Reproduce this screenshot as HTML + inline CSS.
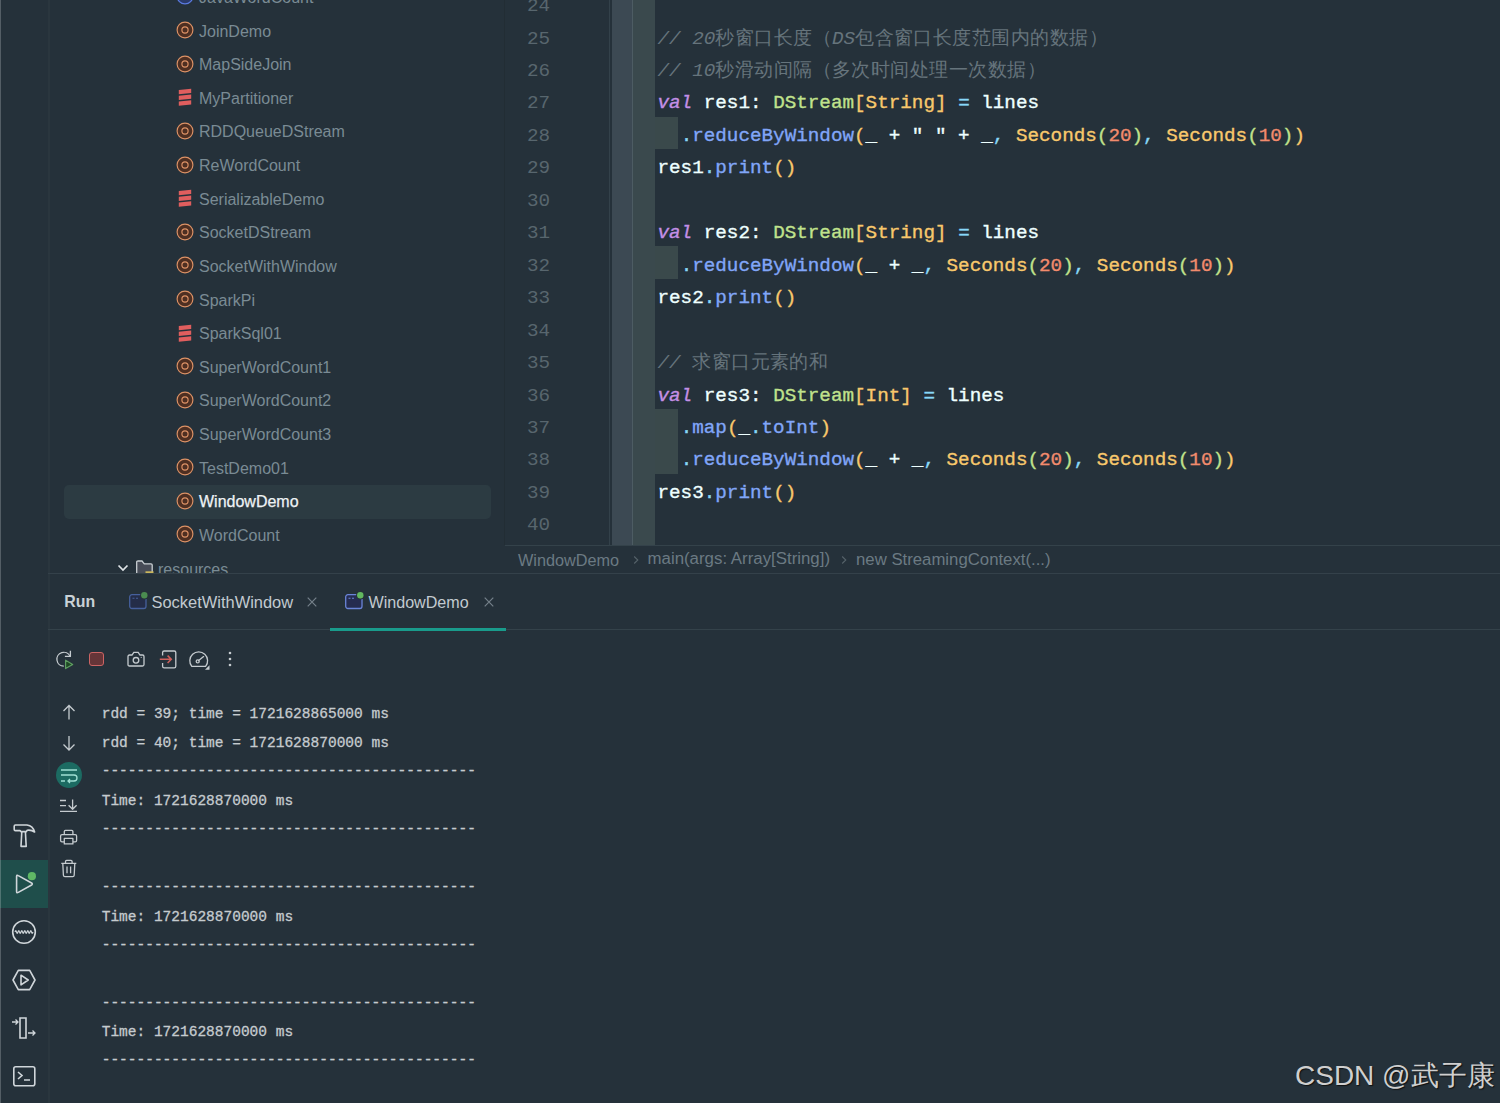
<!DOCTYPE html>
<html><head><meta charset="utf-8">
<style>
*{margin:0;padding:0;box-sizing:border-box}
html,body{width:1500px;height:1103px;overflow:hidden;background:#25313a}
body{position:relative;font-family:"Liberation Sans",sans-serif}
.a{position:absolute}
.ti{position:absolute;left:199px;font-size:16px;color:#7a8b94;white-space:nowrap;line-height:20px;height:20px}
.ic{position:absolute;width:20px;height:20px}
.ln{position:absolute;left:490px;width:60px;text-align:right;font-family:"Liberation Mono",monospace;font-size:19.28px;color:#58666e;line-height:32px;height:32px;white-space:pre}
.cl{position:absolute;left:657.5px;font-family:"Liberation Mono",monospace;font-size:19.28px;color:#eeffff;line-height:32px;height:32px;white-space:pre;-webkit-text-stroke:0.35px currentColor}
.cm{-webkit-text-stroke:0}
.cm{color:#66747c}
.cm i{font-style:italic}
.cj{letter-spacing:0.45px}
.kw{color:#c48fe6;font-style:italic}
.ty{color:#c0e28c}
.yl{color:#f8c86c}
.op{color:#88d8f8}
.fn{color:#81a6f8}
.nm{color:#f28b6d}
.co{position:absolute;left:101.7px;font-family:"Liberation Mono",monospace;font-size:14.5px;color:#c5cbcf;line-height:20px;height:20px;white-space:pre;-webkit-text-stroke:0.3px currentColor}
svg{position:absolute;overflow:visible}
</style></head><body>
<div class="a" style="left:48px;top:0;width:2px;height:1103px;background:#2a363e"></div>
<div class="a" style="left:64px;top:484.5px;width:427px;height:34px;border-radius:5px;background:#2c3b42"></div>
<div class="a" style="left:50px;top:0;width:455px;height:573px;overflow:hidden">
<div class="ti" style="left:149px;top:-12.08px;color:#7a8b94">JavaWordCount</div>
<svg style="left:135.3px;top:-3.63px" width="1" height="1"><circle cx="0" cy="0" r="7.9" fill="#2a3a6a" stroke="#5a7ae0" stroke-width="1.3"/></svg>
<div class="ti" style="left:149px;top:21.55px;color:#7a8b94">JoinDemo</div>
<svg style="left:135.3px;top:30.00px" width="1" height="1"><circle cx="0" cy="0" r="7.9" fill="#4e2f22" stroke="#dd9266" stroke-width="1.15"/><circle cx="0" cy="0" r="3.1" fill="none" stroke="#dd9266" stroke-width="1.15"/></svg>
<div class="ti" style="left:149px;top:55.18px;color:#7a8b94">MapSideJoin</div>
<svg style="left:135.3px;top:63.63px" width="1" height="1"><circle cx="0" cy="0" r="7.9" fill="#4e2f22" stroke="#dd9266" stroke-width="1.15"/><circle cx="0" cy="0" r="3.1" fill="none" stroke="#dd9266" stroke-width="1.15"/></svg>
<div class="ti" style="left:149px;top:88.81px;color:#7a8b94">MyPartitioner</div>
<svg style="left:135.3px;top:97.26px" width="1" height="1"><path d="M-6.2,-6.9 L6.2,-8.2 L6.2,-4 L-6.2,-2.7 Z M-6.2,-1.2 L6.2,-2.5 L6.2,1.7 L-6.2,3 Z M-6.2,4.5 L6.2,3.2 L6.2,7.4 L-6.2,8.7 Z" fill="#e05e5e"/></svg>
<div class="ti" style="left:149px;top:122.44px;color:#7a8b94">RDDQueueDStream</div>
<svg style="left:135.3px;top:130.89px" width="1" height="1"><circle cx="0" cy="0" r="7.9" fill="#4e2f22" stroke="#dd9266" stroke-width="1.15"/><circle cx="0" cy="0" r="3.1" fill="none" stroke="#dd9266" stroke-width="1.15"/></svg>
<div class="ti" style="left:149px;top:156.07px;color:#7a8b94">ReWordCount</div>
<svg style="left:135.3px;top:164.52px" width="1" height="1"><circle cx="0" cy="0" r="7.9" fill="#4e2f22" stroke="#dd9266" stroke-width="1.15"/><circle cx="0" cy="0" r="3.1" fill="none" stroke="#dd9266" stroke-width="1.15"/></svg>
<div class="ti" style="left:149px;top:189.70px;color:#7a8b94">SerializableDemo</div>
<svg style="left:135.3px;top:198.15px" width="1" height="1"><path d="M-6.2,-6.9 L6.2,-8.2 L6.2,-4 L-6.2,-2.7 Z M-6.2,-1.2 L6.2,-2.5 L6.2,1.7 L-6.2,3 Z M-6.2,4.5 L6.2,3.2 L6.2,7.4 L-6.2,8.7 Z" fill="#e05e5e"/></svg>
<div class="ti" style="left:149px;top:223.33px;color:#7a8b94">SocketDStream</div>
<svg style="left:135.3px;top:231.78px" width="1" height="1"><circle cx="0" cy="0" r="7.9" fill="#4e2f22" stroke="#dd9266" stroke-width="1.15"/><circle cx="0" cy="0" r="3.1" fill="none" stroke="#dd9266" stroke-width="1.15"/></svg>
<div class="ti" style="left:149px;top:256.96px;color:#7a8b94">SocketWithWindow</div>
<svg style="left:135.3px;top:265.41px" width="1" height="1"><circle cx="0" cy="0" r="7.9" fill="#4e2f22" stroke="#dd9266" stroke-width="1.15"/><circle cx="0" cy="0" r="3.1" fill="none" stroke="#dd9266" stroke-width="1.15"/></svg>
<div class="ti" style="left:149px;top:290.59px;color:#7a8b94">SparkPi</div>
<svg style="left:135.3px;top:299.04px" width="1" height="1"><circle cx="0" cy="0" r="7.9" fill="#4e2f22" stroke="#dd9266" stroke-width="1.15"/><circle cx="0" cy="0" r="3.1" fill="none" stroke="#dd9266" stroke-width="1.15"/></svg>
<div class="ti" style="left:149px;top:324.22px;color:#7a8b94">SparkSql01</div>
<svg style="left:135.3px;top:332.67px" width="1" height="1"><path d="M-6.2,-6.9 L6.2,-8.2 L6.2,-4 L-6.2,-2.7 Z M-6.2,-1.2 L6.2,-2.5 L6.2,1.7 L-6.2,3 Z M-6.2,4.5 L6.2,3.2 L6.2,7.4 L-6.2,8.7 Z" fill="#e05e5e"/></svg>
<div class="ti" style="left:149px;top:357.85px;color:#7a8b94">SuperWordCount1</div>
<svg style="left:135.3px;top:366.30px" width="1" height="1"><circle cx="0" cy="0" r="7.9" fill="#4e2f22" stroke="#dd9266" stroke-width="1.15"/><circle cx="0" cy="0" r="3.1" fill="none" stroke="#dd9266" stroke-width="1.15"/></svg>
<div class="ti" style="left:149px;top:391.48px;color:#7a8b94">SuperWordCount2</div>
<svg style="left:135.3px;top:399.93px" width="1" height="1"><circle cx="0" cy="0" r="7.9" fill="#4e2f22" stroke="#dd9266" stroke-width="1.15"/><circle cx="0" cy="0" r="3.1" fill="none" stroke="#dd9266" stroke-width="1.15"/></svg>
<div class="ti" style="left:149px;top:425.11px;color:#7a8b94">SuperWordCount3</div>
<svg style="left:135.3px;top:433.56px" width="1" height="1"><circle cx="0" cy="0" r="7.9" fill="#4e2f22" stroke="#dd9266" stroke-width="1.15"/><circle cx="0" cy="0" r="3.1" fill="none" stroke="#dd9266" stroke-width="1.15"/></svg>
<div class="ti" style="left:149px;top:458.74px;color:#7a8b94">TestDemo01</div>
<svg style="left:135.3px;top:467.19px" width="1" height="1"><circle cx="0" cy="0" r="7.9" fill="#4e2f22" stroke="#dd9266" stroke-width="1.15"/><circle cx="0" cy="0" r="3.1" fill="none" stroke="#dd9266" stroke-width="1.15"/></svg>
<div class="ti" style="left:149px;top:492.37px;color:#eef3f5;-webkit-text-stroke:0.25px #eef3f5">WindowDemo</div>
<svg style="left:135.3px;top:500.82px" width="1" height="1"><circle cx="0" cy="0" r="7.9" fill="#4e2f22" stroke="#dd9266" stroke-width="1.15"/><circle cx="0" cy="0" r="3.1" fill="none" stroke="#dd9266" stroke-width="1.15"/></svg>
<div class="ti" style="left:149px;top:526.00px;color:#7a8b94">WordCount</div>
<svg style="left:135.3px;top:534.45px" width="1" height="1"><circle cx="0" cy="0" r="7.9" fill="#4e2f22" stroke="#dd9266" stroke-width="1.15"/><circle cx="0" cy="0" r="3.1" fill="none" stroke="#dd9266" stroke-width="1.15"/></svg>
<svg style="left:73.2px;top:567.58px" width="1" height="1"><path d="M-4.5,-2.5 L0,2 L4.5,-2.5" fill="none" stroke="#dfe4e7" stroke-width="1.7"/></svg>
<svg style="left:85.7px;top:559.58px" width="1" height="1"><path d="M0.7,16 L0.7,2.2 Q0.7,1 2,1 L6,1 L8.3,3.8 L15,3.8 Q16.2,3.8 16.2,5 L16.2,16 Z" fill="#474c57" stroke="#c9cfd3" stroke-width="1.3"/><rect x="9.5" y="11.3" width="8" height="2.4" fill="#cbb75c"/></svg>
<div class="ti" style="left:108px;top:559.63px">resources</div>
</div>
<div class="a" style="left:504px;top:0;width:1px;height:545px;background:#222d34"></div>
<div class="a" style="left:505px;top:544.5px;width:995px;height:1px;background:#34424a"></div>
<div class="a" style="left:48px;top:572.6px;width:1452px;height:1.2px;background:#34414a"></div>
<div class="a" style="left:609px;top:0;width:1px;height:545px;background:#33414a"></div>
<div class="a" style="left:612px;top:0;width:20px;height:545px;background:#3c4953"></div>
<div class="a" style="left:632px;top:0;width:1.2px;height:545px;background:#4d5c63"></div>
<div class="a" style="left:633px;top:0;width:22px;height:545px;background:#3a494d"></div>
<div class="a" style="left:655px;top:116.60px;width:22.5px;height:32.45px;background:#3a494b"></div>
<div class="a" style="left:655px;top:246.40px;width:22.5px;height:32.45px;background:#3a494b"></div>
<div class="a" style="left:655px;top:408.65px;width:22.5px;height:64.90px;background:#3a494b"></div>
<div class="a" style="left:0;top:0;width:1500px;height:545px;overflow:hidden">
<div class="ln" style="top:-9.89px">24</div>
<div class="ln" style="top:22.56px">25</div>
<div class="ln" style="top:55.01px">26</div>
<div class="ln" style="top:87.46px">27</div>
<div class="ln" style="top:119.91px">28</div>
<div class="ln" style="top:152.36px">29</div>
<div class="ln" style="top:184.81px">30</div>
<div class="ln" style="top:217.26px">31</div>
<div class="ln" style="top:249.71px">32</div>
<div class="ln" style="top:282.16px">33</div>
<div class="ln" style="top:314.61px">34</div>
<div class="ln" style="top:347.06px">35</div>
<div class="ln" style="top:379.51px">36</div>
<div class="ln" style="top:411.96px">37</div>
<div class="ln" style="top:444.41px">38</div>
<div class="ln" style="top:476.86px">39</div>
<div class="ln" style="top:509.31px">40</div>
<div class="cl" style="top:22.56px"><span class="cm"><i>// 20</i><span class="cj">秒窗口长度（</span><i>DS</i><span class="cj">包含窗口长度范围内的数据）</span></span></div>
<div class="cl" style="top:55.01px"><span class="cm"><i>// 10</i><span class="cj">秒滑动间隔（多次时间处理一次数据）</span></span></div>
<div class="cl" style="top:87.46px"><span class="kw">val</span> res1: <span class="ty">DStream</span><span class="yl">[String]</span> <span class="op">=</span> lines</div>
<div class="cl" style="top:119.91px">  <span class="op">.</span><span class="fn">reduceByWindow</span><span class="yl">(</span>_ + " " + _<span class="op">,</span> <span class="yl">Seconds</span><span class="ty">(</span><span class="nm">20</span><span class="ty">)</span><span class="op">,</span> <span class="yl">Seconds</span><span class="ty">(</span><span class="nm">10</span><span class="ty">)</span><span class="yl">)</span></div>
<div class="cl" style="top:152.36px">res1<span class="op">.</span><span class="fn">print</span><span class="yl">()</span></div>
<div class="cl" style="top:217.26px"><span class="kw">val</span> res2: <span class="ty">DStream</span><span class="yl">[String]</span> <span class="op">=</span> lines</div>
<div class="cl" style="top:249.71px">  <span class="op">.</span><span class="fn">reduceByWindow</span><span class="yl">(</span>_ + _<span class="op">,</span> <span class="yl">Seconds</span><span class="ty">(</span><span class="nm">20</span><span class="ty">)</span><span class="op">,</span> <span class="yl">Seconds</span><span class="ty">(</span><span class="nm">10</span><span class="ty">)</span><span class="yl">)</span></div>
<div class="cl" style="top:282.16px">res2<span class="op">.</span><span class="fn">print</span><span class="yl">()</span></div>
<div class="cl" style="top:347.06px"><span class="cm"><i>// </i><span class="cj">求窗口元素的和</span></span></div>
<div class="cl" style="top:379.51px"><span class="kw">val</span> res3: <span class="ty">DStream</span><span class="yl">[Int]</span> <span class="op">=</span> lines</div>
<div class="cl" style="top:411.96px">  <span class="op">.</span><span class="fn">map</span><span class="yl">(</span>_<span class="op">.</span><span class="fn">toInt</span><span class="yl">)</span></div>
<div class="cl" style="top:444.41px">  <span class="op">.</span><span class="fn">reduceByWindow</span><span class="yl">(</span>_ + _<span class="op">,</span> <span class="yl">Seconds</span><span class="ty">(</span><span class="nm">20</span><span class="ty">)</span><span class="op">,</span> <span class="yl">Seconds</span><span class="ty">(</span><span class="nm">10</span><span class="ty">)</span><span class="yl">)</span></div>
<div class="cl" style="top:476.86px">res3<span class="op">.</span><span class="fn">print</span><span class="yl">()</span></div>
</div>
<div class="a" style="left:518px;top:549.67px;font-size:16.25px;font-weight:400;color:#6b7a83;white-space:nowrap;line-height:20px;">WindowDemo</div>
<div class="a" style="left:647.5px;top:549.46px;font-size:16.85px;font-weight:400;color:#6b7a83;white-space:nowrap;line-height:20px;">main(args: Array[String])</div>
<div class="a" style="left:856px;top:549.50px;font-size:16.75px;font-weight:400;color:#6b7a83;white-space:nowrap;line-height:20px;">new StreamingContext(...)</div>
<svg style="left:635.5px;top:560px" width="1" height="1"><path d="M-1.8,-3.5 L1.8,0 L-1.8,3.5" fill="none" stroke="#55626a" stroke-width="1.1"/></svg>
<svg style="left:843.5px;top:560px" width="1" height="1"><path d="M-1.8,-3.5 L1.8,0 L-1.8,3.5" fill="none" stroke="#55626a" stroke-width="1.1"/></svg>
<div class="a" style="left:64.3px;top:592.09px;font-size:15.9px;font-weight:700;color:#c9d1d6;white-space:nowrap;line-height:20px;">Run</div>
<svg style="left:128.6px;top:594px" width="1" height="1"><rect x="0.7" y="0.7" width="16.3" height="13.8" rx="2.2" fill="#242d48" stroke="#46609c" stroke-width="1.3"/><path d="M3.5,4.3 L5.5,4.3 M7,4.3 L9,4.3" stroke="#46609c" stroke-width="1.1"/><circle cx="15.3" cy="1.2" r="4.2" fill="#263238"/><circle cx="15.3" cy="1.2" r="3.2" fill="#4b8c50"/></svg>
<div class="a" style="left:151.5px;top:592.30px;font-size:16.45px;font-weight:400;color:#c2cad0;white-space:nowrap;line-height:20px;">SocketWithWindow</div>
<svg style="left:312px;top:602px" width="1" height="1"><path d="M-4.3,-4.3 L4.3,4.3 M4.3,-4.3 L-4.3,4.3" stroke="#75818a" stroke-width="1.2"/></svg>
<svg style="left:345px;top:594px" width="1" height="1"><rect x="0.7" y="0.7" width="16.3" height="13.8" rx="2.2" fill="#252c50" stroke="#6a84d8" stroke-width="1.3"/><path d="M3.5,4.3 L5.5,4.3 M7,4.3 L9,4.3" stroke="#6a84d8" stroke-width="1.1"/><circle cx="15.3" cy="1.2" r="4.2" fill="#263238"/><circle cx="15.3" cy="1.2" r="3.2" fill="#62b85f"/></svg>
<div class="a" style="left:368.5px;top:592.42px;font-size:16.1px;font-weight:400;color:#c2cad0;white-space:nowrap;line-height:20px;">WindowDemo</div>
<svg style="left:488.5px;top:602px" width="1" height="1"><path d="M-4.3,-4.3 L4.3,4.3 M4.3,-4.3 L-4.3,4.3" stroke="#75818a" stroke-width="1.2"/></svg>
<div class="a" style="left:48px;top:629.3px;width:1452px;height:1px;background:#34424a"></div>
<div class="a" style="left:330px;top:627.6px;width:176px;height:3px;background:#199b8b"></div>
<svg style="left:0;top:0" width="1" height="1"><path d="M70,656.2 A6.9,6.9 0 1 0 63.8,666.1" stroke="#c5cbcf" stroke-width="1.3" fill="none"/><path d="M70.4,650.8 L70.4,656.4 L64.9,656.4" stroke="#c5cbcf" stroke-width="1.3" fill="none" stroke-linejoin="round"/><path d="M65.6,660.2 L72.7,664.4 L65.6,668.6 Z" stroke="#5f9f62" stroke-width="1.2" fill="#1f4a25" stroke-linejoin="round"/></svg>
<div class="a" style="left:89px;top:652.2px;width:14.6px;height:14.2px;border-radius:3px;background:#663538;border:1.3px solid #cc6464"></div>
<svg style="left:127px;top:650px" width="1" height="1"><path d="M2.5,5 L5,5 L6.8,2.3 L11.2,2.3 L13,5 L15.5,5 Q17,5 17,6.5 L17,14.5 Q17,16 15.5,16 L2.5,16 Q1,16 1,14.5 L1,6.5 Q1,5 2.5,5 Z" stroke="#c5cbcf" stroke-width="1.3" fill="none"/><circle cx="9" cy="10.3" r="2.8" stroke="#c5cbcf" stroke-width="1.3" fill="none"/><circle cx="14.2" cy="7.3" r="0.6" fill="#c5cbcf"/></svg>
<svg style="left:0;top:0" width="1" height="1"><path d="M162.6,655.5 L162.6,652.6 Q162.6,651 164.2,651 L174.2,651 Q175.8,651 175.8,652.6 L175.8,666.3 Q175.8,667.9 174.2,667.9 L164.2,667.9 Q162.6,667.9 162.6,666.3 L162.6,663" stroke="#c5cbcf" stroke-width="1.3" fill="none"/><path d="M159.8,659.3 L171.3,659.3 M167.6,655.6 L171.3,659.3 L167.6,663" stroke="#d0605c" stroke-width="1.5" fill="none"/></svg>
<svg style="left:0;top:0" width="1" height="1"><path d="M191.8,666.4 L205.6,666.4 A8.9,8.9 0 1 0 191.8,666.4 Z" stroke="#c5cbcf" stroke-width="1.3" fill="none" stroke-linejoin="round"/><path d="M198.6,660.6 L203.6,656.6" stroke="#c5cbcf" stroke-width="1.3" fill="none" stroke-linecap="round"/><circle cx="197.7" cy="661.4" r="1.5" stroke="#c5cbcf" stroke-width="1.3" fill="none"/><path d="M205,669.8 L209.5,669.8 L209.5,665.3 Z" fill="#c5cbcf"/></svg>
<svg style="left:230px;top:659.2px" width="1" height="1"><circle cx="0" cy="-6" r="1.3" fill="#c5cbcf"/><circle cx="0" cy="0" r="1.3" fill="#c5cbcf"/><circle cx="0" cy="6" r="1.3" fill="#c5cbcf"/></svg>
<svg style="left:68.7px;top:705px" width="1" height="1"><path d="M0,0.5 L0,14.5 M-5.5,6 L0,0.5 L5.5,6" stroke="#c5cbcf" stroke-width="1.3" fill="none"/></svg>
<svg style="left:68.7px;top:736px" width="1" height="1"><path d="M0,0 L0,14 M-5.5,8.5 L0,14 L5.5,8.5" stroke="#c5cbcf" stroke-width="1.3" fill="none"/></svg>
<div class="a" style="left:55.7px;top:761.5px;width:26px;height:26px;border-radius:13px;background:#1c6b62"></div>
<svg style="left:55.7px;top:761.5px" width="1" height="1"><path d="M5,8 L21,8 M5,13 L18,13 A3,3 0 0 1 18,19 L12,19 M5,19 L9,19 M14,17 L12,19 L14,21" stroke="#9fe0d4" stroke-width="1.3" fill="none"/></svg>
<svg style="left:0;top:0" width="1" height="1"><path d="M60,800.5 L66,800.5 M60,805.7 L66,805.7 M60,811.3 L77,811.3 M72.6,799.5 L72.6,809.3 M68.6,805.2 L72.6,809.3 L76.6,805.2" stroke="#c5cbcf" stroke-width="1.3" fill="none" stroke-linejoin="round"/></svg>
<svg style="left:0;top:0" width="1" height="1"><path d="M64.3,834.5 L64.3,831.5 Q64.3,830.4 65.4,830.4 L71.8,830.4 Q72.9,830.4 72.9,831.5 L72.9,834.5 M64.3,841.8 L62,841.8 Q60.6,841.8 60.6,840.4 L60.6,836 Q60.6,834.6 62,834.6 L75.2,834.6 Q76.6,834.6 76.6,836 L76.6,840.4 Q76.6,841.8 75.2,841.8 L72.9,841.8 M64.3,838.4 L72.9,838.4 L72.9,843.9 L64.3,843.9 Z" stroke="#c5cbcf" stroke-width="1.3" fill="none" stroke-linejoin="round"/></svg>
<svg style="left:0;top:0" width="1" height="1"><path d="M61.3,863.3 L76.3,863.3 M65.5,863.3 L65.5,861.5 Q65.5,860.4 66.6,860.4 L71,860.4 Q72.1,860.4 72.1,861.5 L72.1,863.3 M62.8,863.3 L63.4,875.2 Q63.5,876.6 64.9,876.6 L72.7,876.6 Q74.1,876.6 74.2,875.2 L74.8,863.3 M67,866.5 L67,873.3 M70.6,866.5 L70.6,873.3" stroke="#c5cbcf" stroke-width="1.3" fill="none" stroke-linejoin="round"/></svg>
<div class="co" style="top:704.34px">rdd = 39; time = 1721628865000 ms</div>
<div class="co" style="top:733.26px">rdd = 40; time = 1721628870000 ms</div>
<div class="co" style="top:761.18px">-------------------------------------------</div>
<div class="co" style="top:791.10px">Time: 1721628870000 ms</div>
<div class="co" style="top:819.02px">-------------------------------------------</div>
<div class="co" style="top:876.86px">-------------------------------------------</div>
<div class="co" style="top:906.78px">Time: 1721628870000 ms</div>
<div class="co" style="top:934.70px">-------------------------------------------</div>
<div class="co" style="top:992.54px">-------------------------------------------</div>
<div class="co" style="top:1022.46px">Time: 1721628870000 ms</div>
<div class="co" style="top:1050.38px">-------------------------------------------</div>
<div class="a" style="left:0;top:859.5px;width:48px;height:48.5px;background:#1f4e4b"></div>
<div class="a" style="left:0;top:0;width:1.3px;height:1103px;background:rgba(255,255,255,0.22)"></div>
<svg style="left:0;top:0" width="1" height="1"><path d="M14.2,826.2 Q14.2,825 15.4,825 L27,825 Q33,825.8 34.6,832 Q31.5,829.6 27.2,830.2 L26.4,831.6 L20.8,831.6 L20,830.6 L15.4,830.6 Q14.2,830.6 14.2,829.4 Z" stroke="#d0d6da" stroke-width="1.6" fill="none" stroke-linejoin="round"/><path d="M21.8,831.8 L21,846.4 L26.2,846.4 L25.4,831.8" stroke="#d0d6da" stroke-width="1.6" fill="none" stroke-linejoin="round"/></svg>
<svg style="left:0;top:0" width="1" height="1"><path d="M16.6,876.5 Q16.6,874.6 18.3,875.6 L31.6,883 Q33,884 31.6,885 L18.3,892.4 Q16.6,893.4 16.6,891.5 Z" stroke="#d0d6da" stroke-width="1.6" fill="none" stroke-linejoin="round"/><circle cx="31.9" cy="876.2" r="4.1" fill="#5fb865"/></svg>
<svg style="left:24px;top:931.8px" width="1" height="1"><circle cx="0" cy="0" r="11.3" stroke="#d0d6da" stroke-width="1.6" fill="none"/><path d="M-9,0 L-8.50,-1.13 L-8.00,-1.13 L-7.50,-0.00 L-7.00,1.13 L-6.50,1.13 L-6.00,0.00 L-5.50,-1.13 L-5.00,-1.13 L-4.50,-0.00 L-4.00,1.13 L-3.50,1.13 L-3.00,0.00 L-2.50,-1.13 L-2.00,-1.13 L-1.50,-0.00 L-1.00,1.13 L-0.50,1.13 L0.00,0.00 L0.50,-1.13 L1.00,-1.13 L1.50,-0.00 L2.00,1.13 L2.50,1.13 L3.00,0.00 L3.50,-1.13 L4.00,-1.13 L4.50,-0.00 L5.00,1.13 L5.50,1.13 L6.00,0.00 L6.50,-1.13 L7.00,-1.13 L7.50,-0.00 L8.00,1.13 L8.50,1.13 L9.00,0.00" stroke="#d0d6da" stroke-width="1.15" fill="none"/></svg>
<svg style="left:24px;top:980.3px" width="1" height="1"><path d="M-11,0 L-5.7,-9.6 L5.7,-9.6 L11,0 L5.7,9.6 L-5.7,9.6 Z" stroke="#d0d6da" stroke-width="1.6" fill="none" stroke-linejoin="round"/><path d="M-3,-4.8 L4.2,0 L-3,4.8 Z" stroke="#d0d6da" stroke-width="1.6" fill="none" stroke-linejoin="round"/></svg>
<svg style="left:12px;top:1017px" width="1" height="1"><path d="M8,1 L14,1 L14,21 L8,21 Z" stroke="#d0d6da" stroke-width="1.6" fill="none"/><path d="M0,5 L6,5 M3.5,2.5 L6,5 L3.5,7.5 M16,16 L23,16 M20.5,13.5 L23,16 L20.5,18.5" stroke="#d0d6da" stroke-width="1.3" fill="none"/></svg>
<svg style="left:13px;top:1066px" width="1" height="1"><rect x="0.8" y="0.8" width="21" height="19" rx="2" stroke="#d0d6da" stroke-width="1.6" fill="none"/><path d="M5,6 L9,9.5 L5,13 M11,14 L17,14" stroke="#d0d6da" stroke-width="1.6" fill="none"/></svg>
<div class="a" style="left:1295px;top:1065.80px;font-size:28px;font-weight:400;color:#cfcfcf;white-space:nowrap;line-height:20px;line-height:20px;text-shadow:1px 1px 1px #111">CSDN @武子康</div>
</body></html>
